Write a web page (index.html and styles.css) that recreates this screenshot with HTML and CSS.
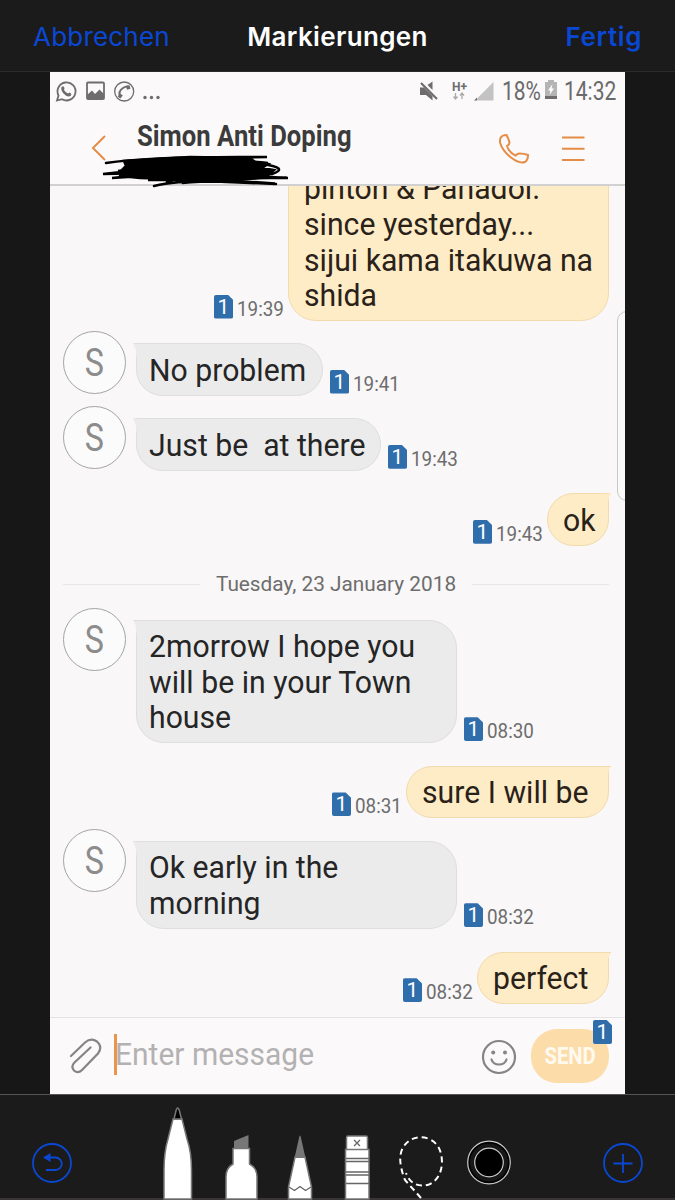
FILE: index.html
```html
<!DOCTYPE html>
<html lang="de">
	<head>
<meta charset="UTF-8">
<title>Markierungen</title>
<link rel="stylesheet" href="styles.css">
	</head>
	<body>
        <div class="topbar">
            <span class="cancel">Abbrechen</span>
            <span class="title">Markierungen</span>
            <span class="done">Fertig</span>
        </div>

        <div class="photo">
            <div class="status">
                <svg class="icons-left" width="110" height="24" viewBox="0 0 110 24">
                    <g fill="none" stroke="#6d6d6d" stroke-width="1.8">
                        <path d="M2 21.500L3.500 16.500A9 9 0 1 1 7 20.200Z"/>
                        <rect x="32" y="3.500" width="17" height="16.500" rx="1"/>
                        <circle cx="69.200" cy="12.500" r="9.500" stroke-width="1.300"/>
                    </g>
                    <path fill="#6d6d6d" d="M6.500 8Q8.500 6 9.500 9L9 11Q10.500 13.500 13 14.500L14.500 13.500Q17.500 15 15.500 17Q12 18.500 8.500 14.500Q5.500 11 6.500 8Z"/>
                    <path fill="#6d6d6d" d="M32 16L37 11.500L40 15L44.500 10.500L49 15V20H32Z"/>
                    <path fill="none" stroke="#6d6d6d" stroke-width="2" d="M65 18Q63 12 68 9T74 8.500"/>
                    <path fill="none" stroke="#6d6d6d" stroke-width="3.500" d="M64 18.500L66.500 15.500M71.500 9L75 8"/>
                    <g fill="#6d6d6d"><circle cx="90" cy="18.500" r="1.700"/><circle cx="96.500" cy="18.500" r="1.700"/><circle cx="103" cy="18.500" r="1.700"/></g>
                </svg>
                <svg class="icons-right" width="78" height="24" viewBox="0 0 78 24">
                    <g fill="#6d6d6d">
                        <path d="M2 8.500H6L14.500 17V21.500L8 16H2Z"/>
                        <path d="M9.500 6L14.500 2.500V11Z"/>
                        <path d="M56 21.500L59 18.500V21.500Z"/>
                        <text class="hplus" x="34" y="12">H+</text>
                    </g>
                    <path stroke="#6d6d6d" stroke-width="2.200" d="M3 4L19 20"/>
                    <path fill="none" stroke="#aaa" stroke-width="1.300" d="M37.500 14V19.500M35.500 17.500L37.500 20L39.500 17.500M44 20V14.500M42 16.500L44 14L46 16.500"/>
                    <path fill="#c4c3c4" d="M75.500 3V21.500H59V19.500Z"/>
                </svg>
                <span class="percent">18%</span>
                <svg class="battery" width="14" height="20" viewBox="0 0 14 20">
                    <path fill="#b5b4b5" d="M4 0H10V2H13V19H1V2H4Z"/>
                    <path fill="#6d6d6d" d="M1 16H13V19H1Z"/>
                    <path fill="#fff" d="M8.500 4L4 10.500H6.500L5.500 15L10 8.500H7.500Z"/>
                </svg>
                <span class="clock">14:32</span>
            </div>
            <div class="header">
                <svg class="back" width="16" height="28" viewBox="0 0 16 28"><path d="M14 2L2 14L14 26"/></svg>
                <span class="name">Simon Anti Doping</span>
                <svg class="call" width="32" height="32" viewBox="0 0 32 32"><path d="M2.500 5Q4 2 8.500 2Q10.500 5.500 11.500 9.500Q11.500 11.500 9 13Q11 19.500 17.500 22.500Q19.500 20.500 21.500 20.500Q26 20.500 30 22Q30 27 27 29Q21.500 31 13 24.500T2 9.500Q1.800 7 2.500 5Z"/></svg>
                <svg class="menu" width="24" height="28" viewBox="0 0 24 28"><path d="M1 2.500H23.500M1 13.700H23.500M1 25H23.500"/></svg>
                <svg class="scribble" width="200" height="36" viewBox="100 153 200 36">
                    <path class="fill" d="M124 161L190 157L250 158L255 162L268 164L262 168L274 170L266 177L240 180L200 178L176 179L140 178L120 176L122 170L126 166Z"/>
                    <path d="M106 163Q150 156 267 157Q180 158 132 164Q210 157 268 163Q170 164 118 171Q200 162 262 164Q290 168 272 174Q200 172 103 174Q160 167 226 170Q150 174 112 178Q190 172 288 178Q220 176 148 180Q200 180 286 177.500M154 186Q175 181 210 181T275 183.500Q220 180 182 183L190 178M167 182L176 179M180 180L276 184"/>
                </svg>
            </div>

            <div class="chat">
                <div class="row sent long">
                    <span class="sim">1</span><span class="time">19:39</span>
                    <div class="bubble"><span class="line">pinton &amp; Panadol.<br>since yesterday...<br>sijui kama itakuwa na<br>shida</span></div>
                </div>
                <div class="row">
                    <span class="avatar"><i>S</i></span>
                    <div class="bubble w187"><span class="line">No problem</span></div>
                    <span class="sim">1</span><span class="time">19:41</span>
                </div>
                <div class="row">
                    <span class="avatar"><i>S</i></span>
                    <div class="bubble w245"><span class="line">Just be&nbsp; at there</span></div>
                    <span class="sim">1</span><span class="time">19:43</span>
                </div>
                <div class="row sent">
                    <span class="sim">1</span><span class="time">19:43</span>
                    <div class="bubble w62"><span class="line">ok</span></div>
                </div>
                <div class="date"><span>Tuesday, 23 January 2018</span></div>
                <div class="row">
                    <span class="avatar"><i>S</i></span>
                    <div class="bubble w321"><span class="line">2morrow I hope you<br>will be in your Town<br>house</span></div>
                    <span class="sim">1</span><span class="time">08:30</span>
                </div>
                <div class="row sent">
                    <span class="sim">1</span><span class="time">08:31</span>
                    <div class="bubble w203"><span class="line">sure I will be</span></div>
                </div>
                <div class="row">
                    <span class="avatar"><i>S</i></span>
                    <div class="bubble w321"><span class="line">Ok early in the<br>morning</span></div>
                    <span class="sim">1</span><span class="time">08:32</span>
                </div>
                <div class="row sent">
                    <span class="sim">1</span><span class="time">08:32</span>
                    <div class="bubble w132"><span class="line">perfect</span></div>
                </div>
                <div class="scroller"></div>
            </div>

            <div class="composer">
                <svg class="clip" width="34" height="36" viewBox="0 0 34 36"><path d="M2 18L16 4.500Q22 -0.500 28 3.500Q34 9 29 15.500L13 32Q9 36 5 32.500Q1.500 28.500 5.500 24.500L21.500 9.500"/></svg>
                <span class="cursor"></span>
                <span class="placeholder">Enter message</span>
                <svg class="smiley" width="36" height="36" viewBox="0 0 36 36">
                    <circle cx="18" cy="18" r="16"/>
                    <path d="M10.500 20.500Q12 25.500 18 25.500T25.500 20.500"/>
                    <circle class="eye" cx="12.200" cy="13.500" r="2"/><circle class="eye" cx="24" cy="13.500" r="2"/>
                </svg>
                <span class="send"><b>SEND</b><span class="sim">1</span></span>
            </div>
        </div>

        <div class="toolbar">
            <svg class="undo" width="40" height="40" viewBox="0 0 40 40">
                <circle cx="20" cy="20" r="19"/>
                <path d="M16 14.500H23.500A6 6 0 0 1 23.500 27H14"/>
                <path class="head" d="M11 14.500L18.500 10V19Z"/>
            </svg>
            <svg class="tools" width="360" height="105" viewBox="160 1095 360 105">
                <g fill="#fff" stroke="#777" stroke-width="1.500">
                    <path d="M164 1199V1170Q164 1152 168 1139L173 1119H182L187 1139Q191.500 1152 191.500 1170V1199Z"/>
                    <path fill="#000" d="M174 1119L176.200 1110Q177.700 1106 179.200 1110L181.500 1119Z"/>
                    <path d="M226 1199V1177Q226 1168 233 1164V1148.500H249.500V1164Q257 1168 257 1177V1199Z"/>
                    <path d="M288.500 1199V1187L295 1157H305L311.500 1187V1199Z"/>
                    <rect x="346.500" y="1136" width="21" height="14" rx="1.500"/>
                    <path d="M345.500 1199V1149.500H369V1199Z"/>
                </g>
                <path fill="#777" d="M234 1148V1141L248.500 1135V1148ZM294.500 1158L299.200 1137Q300 1134 300.800 1137L305.500 1158Z"/>
                <path fill="none" stroke="#666" stroke-width="1.300" d="M289 1187L294.500 1190.500L300 1186.500L305.500 1190.500L311 1187M346 1158.500H369M346 1161.500H369M346 1172H369M346 1175H369M346 1183.500H369M354 1140L360 1146M360 1140L354 1146"/>
                <path fill="none" stroke="#fff" stroke-width="2" stroke-dasharray="6 4" d="M421 1198L405 1180Q396 1157 404 1146Q413 1134 428 1138.500Q442 1144 442 1163Q441 1179 429 1184.500Q412 1189 406 1173"/>
                <circle cx="489" cy="1162.500" r="21.300" fill="#000" stroke="#ccc" stroke-width="1.200"/>
                <circle cx="489" cy="1162.500" r="17" fill="none" stroke="#171717" stroke-width="4"/>
                <circle cx="489" cy="1162.500" r="14.300" fill="#000" stroke="#ccc" stroke-width="1.200"/>
            </svg>
            <svg class="add" width="40" height="40" viewBox="0 0 40 40">
                <circle cx="20" cy="20" r="19"/>
                <path d="M20 11V30M10.500 20.500H29.500"/>
            </svg>
        </div>
	</body>
</html>
```
FILE: styles.css
```css
* {
    box-sizing: border-box;
}
body {
    margin: 0;
    width: 675px;
    height: 1200px;
    overflow: hidden;
    background-color: #171717;
    font-family: Roboto, "Liberation Sans", sans-serif;
}
svg {
    display: block;
    flex-shrink: 0;
}
span {
    white-space: nowrap;
}
.topbar {
    height: 72px;
    border-bottom: 1px solid #2c2c2c;
    background-color: #1b1b1b;
    display: grid;
    grid-template-columns: 1fr auto 1fr;
    align-items: center;
    padding: 0 33px;
    font-family: Inter, "Liberation Sans", sans-serif;
    font-size: 26px;
    line-height: 73px;
    letter-spacing: .2px;
    color: #0a48d4;
}
.title {
    color: #fff;
    font-weight: 600;
    letter-spacing: .35px;
}
.done {
    font-weight: 600;
    letter-spacing: .6px;
    text-align: right;
}
.photo {
    width: 575px;
    height: 1022px;
    margin: 0 auto;
    background-color: #f9f7f8;
    color: #252525;
}
.status {
    height: 38px;
    display: flex;
    align-items: center;
    padding: 0 9px 0 5px;
    background-color: #fbf9fa;
    color: #6a6a6a;
    font-size: 25px;
}
.icons-right {
    margin-left: auto;
}
.hplus {
    font-size: 12px;
    font-weight: bold;
}
.percent, .clock {
    transform: scaleX(.84);
}
.percent {
    width: 38px;
    margin-left: 6px;
    transform-origin: left;
}
.battery {
    margin: 0 6px 2px 4px;
}
.clock {
    width: 52px;
    transform-origin: left;
}
.header {
    position: relative;
    height: 76px;
    border-bottom: 2px solid #d2d1d2;
    background-color: #fbf9fa;
    display: flex;
    align-items: flex-start;
}
.header svg {
    fill: none;
    stroke: #e58d47;
    stroke-width: 2;
}
.back {
    margin: 24px 0 0 41px;
}
.name {
    width: 360px;
    margin: 8px 0 0 30px;
    font-size: 29px;
    line-height: 36px;
    font-weight: bold;
    color: #3b3b3b;
    transform: scaleX(.885);
    transform-origin: left;
}
.call {
    margin: 23px 0 0 1px;
}
.menu {
    margin: 25px 0 0 31px;
}
.header .scribble {
    position: absolute;
    left: 50px;
    top: 43px;
    z-index: 2;
    stroke: #000;
    stroke-width: 2.500;
    stroke-linecap: round;
}
.scribble .fill {
    fill: #000;
}
.chat {
    position: relative;
    height: 831px;
    overflow: hidden;
    display: flex;
    flex-direction: column;
    padding: 0 16px 0 13px;
}
.row {
    flex-shrink: 0;
    display: flex;
    align-items: flex-end;
    margin-bottom: 22.800px;
}
.sent {
    justify-content: flex-end;
}
.avatar {
    align-self: flex-start;
    width: 63px;
    height: 63px;
    margin: -12px 10px -20px 0;
    border: 1.500px solid #a4a4a4;
    border-radius: 50%;
    background-color: #fcfbfb;
    color: #8c8c8c;
    font-size: 38px;
    line-height: 62px;
    text-align: center;
}
.avatar i {
    display: inline-block;
    font-style: normal;
    transform: scaleX(.85);
}
.bubble {
    position: relative;
    padding: 8.300px 12px 6.300px;
    border: 1px solid #dedede;
    border-radius: 0 28px 28px 28px;
    background-color: #ebebeb;
    font-size: 31px;
    line-height: 35.700px;
}
.bubble::before {
    content: "";
    position: absolute;
    top: -1px;
    left: -4px;
    width: 6px;
    height: 14px;
    border-top: 1px solid #dedede;
    background-color: #ebebeb;
    clip-path: polygon(0 0, 100% 0, 100% 100%, 60% 100%, 45% 40%);
}
.sent .bubble {
    border-color: #f1dbac;
    border-radius: 28px 0 28px 28px;
    background-color: #feecc7;
    padding-left: 15px;
    color: #2a2118;
}
.sent .bubble::before {
    left: auto;
    right: -3px;
    border-color: #f1dbac;
    background-color: #feecc7;
    clip-path: polygon(0 0, 100% 0, 55% 40%, 40% 100%, 0 100%);
}
.line {
    display: block;
    transform: scaleX(.974);
    transform-origin: left;
}
.w62 { width: 62px; }
.w132 { width: 132px; }
.w187 { width: 187px; }
.w203 { width: 203px; }
.w245 { width: 245px; }
.w321 { width: 321px; }
.long .bubble {
    width: 321px;
    height: 194px;
    margin-top: -59.500px;
    padding-top: 43.700px;
}
.long .bubble::before {
    display: none;
}
.sim {
    width: 19px;
    height: 24px;
    margin: 0 0 2px 7px;
    border-radius: 2px;
    background-color: #2f6dab;
    clip-path: polygon(0 0, 72% 0, 100% 22%, 100% 100%, 0 100%);
    color: #fff;
    font-size: 21px;
    line-height: 25px;
    text-align: center;
}
.time {
    width: 47px;
    margin: 0 0 1px 4px;
    font-size: 20px;
    line-height: 22px;
    color: #6d6d6d;
    transform: scaleX(.94);
    transform-origin: left;
}
.sent .time {
    margin-right: 4px;
}
.date {
    flex-shrink: 0;
    display: flex;
    align-items: center;
    gap: 16px;
    height: 51px;
    margin-top: -10px;
    margin-bottom: 10px;
    font-size: 20.800px;
    color: #6d6d6d;
}
.date::before, .date::after {
    content: "";
    flex: 1;
    height: 1px;
    background-color: #e9e8e8;
}
.scroller {
    position: absolute;
    left: 567px;
    top: 125px;
    width: 20px;
    height: 190px;
    border: 1px solid #c9c8c8;
    border-radius: 10px;
    background-color: #fbfafa;
}
.composer {
    height: 77px;
    border-top: 1px solid #e4e2e3;
    background-color: #fbf9fa;
    display: flex;
    align-items: center;
    padding: 0 16px 0 19px;
}
.clip, .smiley {
    fill: none;
    stroke: #858585;
    stroke-width: 2.200;
    stroke-linecap: round;
}
.eye {
    fill: #858585;
    stroke: none;
}
.cursor {
    width: 3px;
    height: 41px;
    margin: -4px 0 0 11px;
    background-color: #e9944f;
}
.placeholder {
    margin: -3px 0 0 -2px;
    font-size: 31px;
    color: #b3b1b2;
    transform: scaleX(.967);
    transform-origin: left;
}
.smiley {
    margin: 2px 14px 0 auto;
}
.send {
    position: relative;
    width: 78px;
    height: 54px;
    border-radius: 26px;
    background-color: #fcdda9;
    color: #fffaf0;
    text-align: center;
    font-size: 23px;
    line-height: 55px;
}
.send b {
    display: inline-block;
    margin: 0 -10px;
    transform: scaleX(.88);
}
.send .sim {
    position: absolute;
    right: -3px;
    top: -9px;
    margin: 0;
}
.toolbar {
    height: 106px;
    border-top: 1px solid #555;
    border-bottom: 2px solid #393536;
    background-color: #1b1b1b;
    display: flex;
    align-items: flex-start;
    padding-left: 32px;
}
.undo, .add {
    margin-top: 48px;
    fill: none;
    stroke: #0a48d4;
    stroke-width: 1.800;
}
.undo .head {
    fill: #0a48d4;
    stroke: none;
}
.tools {
    margin: 0 83px 0 88px;
}
```
